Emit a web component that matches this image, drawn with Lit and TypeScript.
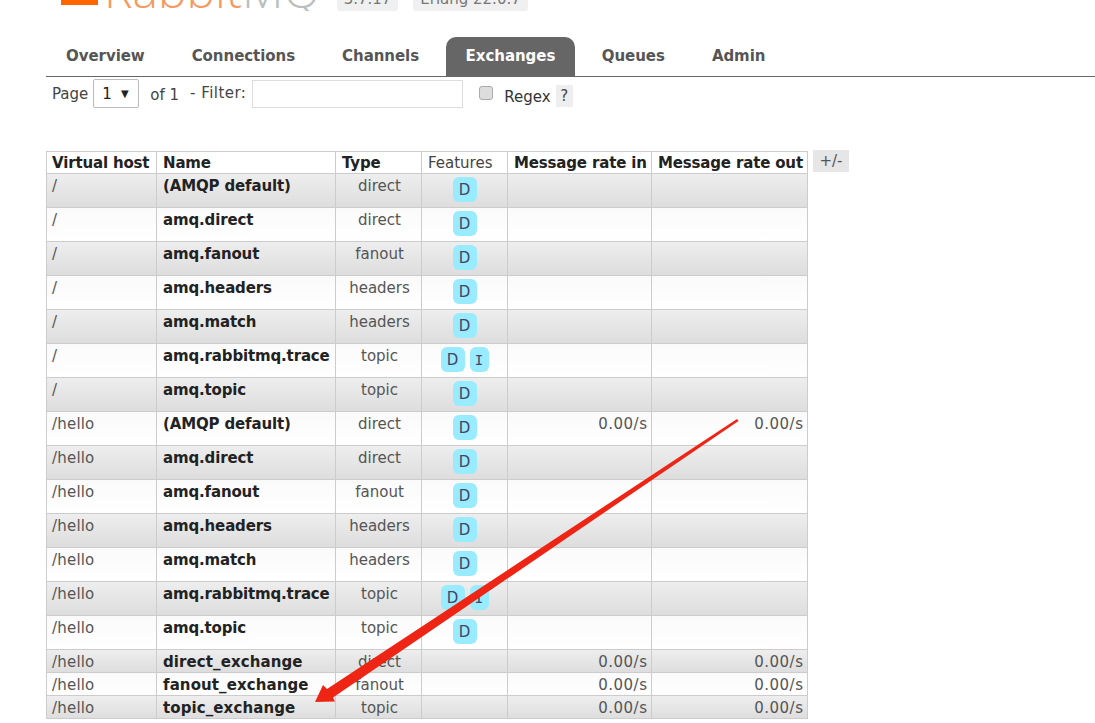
import { LitElement, html, css } from "lit";
import { customElement } from "lit/decorators.js";
import { classMap } from "lit/directives/class-map.js";

type Row = { vhost: string; name: string; type: string; features: string[]; rateIn: string; rateOut: string; small?: boolean };

const base: [string, string, string[]][] = [
  ["(AMQP default)", "direct", ["D"]],
  ["amq.direct", "direct", ["D"]],
  ["amq.fanout", "fanout", ["D"]],
  ["amq.headers", "headers", ["D"]],
  ["amq.match", "headers", ["D"]],
  ["amq.rabbitmq.trace", "topic", ["D", "I"]],
  ["amq.topic", "topic", ["D"]],
];

const rows: Row[] = [
  ...base.map(([name, type, features]) => ({ vhost: "/", name, type, features, rateIn: "", rateOut: "" })),
  ...base.map(([name, type, features], i) => ({
    vhost: "/hello", name, type, features,
    rateIn: i === 0 ? "0.00/s" : "",
    rateOut: i === 0 ? "0.00/s" : "",
  })),
  ...[["direct_exchange", "direct"], ["fanout_exchange", "fanout"], ["topic_exchange", "topic"]].map(([name, type]) => ({
    vhost: "/hello", name, type, features: [], rateIn: "0.00/s", rateOut: "0.00/s", small: true,
  })),
];

const tabs = ["Overview", "Connections", "Channels", "Exchanges", "Queues", "Admin"];

@customElement("app-root")
export class AppRoot extends LitElement {
  static styles = css`
    :host {
      display: block;
      position: relative;
      height: 723px;
      overflow: hidden;
      background: #fff;
      font-family: "DejaVu Sans", Verdana, sans-serif;
      font-size: 15px;
      line-height: 18px;
      color: #555;
    }
    .top { height: 37px; position: relative; overflow: hidden; }
    .brand { display: flex; align-items: flex-end; height: 11px; padding-left: 61px; overflow: hidden; }
    .mark { width: 37px; height: 5px; margin-bottom: 6px; background: #f60; flex: none; }
    .logo {
      margin-left: 6px; width: 233px; flex: none; height: 56px;
      font-family: "Open Sans", sans-serif; font-weight: 300; font-size: 48px; line-height: 56px;
      margin-bottom: -7px; color: #f5995f; white-space: nowrap;
    }
    .logo span { color: #b9bfc0; }
    .badge {
      flex: none; height: 24px; margin-bottom: 0; box-sizing: border-box; border-radius: 3px;
      background: #f0f0f0; color: #777; font-size: 15px; line-height: 18px; white-space: nowrap;
      display: flex; align-items: flex-end; padding-bottom: 3px;
    }
    .b1 { width: 61px; justify-content: center; }
    .b2 { width: 115px; margin-left: 15px; justify-content: center; }

    .tabs { display: flex; gap: 7px; margin-left: 46px; height: 39px; border-bottom: 1px solid #666; }
    .tab {
      padding: 0 20px; font-weight: 700; letter-spacing: -0.05px; color: #555; line-height: 39px; border-radius: 10px 10px 0 0; white-space: nowrap;
    }
    .tab.on { background: #666; color: #fff; padding: 0 19.5px; }

    .filter { display: flex; align-items: flex-start; height: 74px; white-space: nowrap; color: #444; }
    .page { margin: 8px 0 0 52px; }
    .select {
      margin: 2px 0 0 5px; width: 46px; height: 29px; box-sizing: border-box;
      border: 1px solid #bbb; border-radius: 2px; display: flex; align-items: center; color: #222; padding-left: 8px; gap: 9px;
    }
    .select i { font-style: normal; font-size: 10px; }
    .of { margin: 9px 0 0 11px; }
    .flt { margin: 7px 0 0 11px; letter-spacing: 0.45px; }
    .input { margin: 3px 0 0 6px; width: 211px; height: 28px; box-sizing: border-box; border: 1px solid #ddd; }
    .check {
      margin: 9px 0 0 16px; width: 14px; height: 14px; box-sizing: border-box;
      border: 1px solid #aaa; border-radius: 3px; background: #ddd;
    }
    .regex { margin: 11px 0 0 11px; color: #333; }
    .help { margin: 8px 0 0 5px; width: 17px; height: 22px; background: #eee; text-align: center; line-height: 22px; color: #444; }

    .wrap { display: flex; align-items: flex-start; margin-left: 46px; }
    table { border-collapse: collapse; table-layout: fixed; width: 761px; flex: none; }
    th, td { border: 1px solid #ccc; padding: 0 4px 0 6px; box-sizing: border-box; vertical-align: top; white-space: nowrap; }
    th:first-child, td:first-child { padding-left: 5px; }
    th { height: 22px; padding-top: 2px; text-align: left; color: #222; font-weight: 700; letter-spacing: -0.16px; background: #fff; }
    th.plain { font-weight: 400; letter-spacing: 0; color: #444; }
    tbody tr { height: 34px; background: linear-gradient(#fafafa, #fff); }
    tbody tr:nth-child(odd) { background: linear-gradient(#eee, #ddd); }
    tbody tr.small { height: 23px; }
    td { padding-top: 3px; }
    td:first-child { letter-spacing: 0.2px; }
    .nm { font-weight: 700; color: #222; letter-spacing: -0.15px; }
    tr.small .nm { letter-spacing: 0.1px; }
    .ty { text-align: center; }
    .ft { text-align: center; padding: 3px 0 0; }
    .num { text-align: right; letter-spacing: 0.5px; padding-right: 3.5px; }
    .chips { display: flex; justify-content: center; gap: 5px; }
    .chip {
      width: 24px; height: 25px; border-radius: 6px; background: #99ebff; color: #446;
      line-height: 27px; text-align: center;
    }
    .chip.thin { width: 19px; font-family: "DejaVu Sans Mono", monospace; font-size: 14px; }
    .toggle { margin: -1px 0 0 5px; width: 36px; height: 22px; background: #e6e6e6; text-align: center; line-height: 22px; flex: none; }

    .arrow { position: absolute; left: 0; top: 0; pointer-events: none; }
  `;

  render() {
    return html`
      <div class="top">
        <div class="brand">
          <div class="mark"></div>
          <div class="logo">Rabbit<span>MQ</span></div>
          <div class="badge b1">3.7.17</div>
          <div class="badge b2">Erlang 22.0.7</div>
        </div>
      </div>
      <nav class="tabs">
        ${tabs.map((t) => html`<div class=${classMap({ tab: true, on: t === "Exchanges" })}>${t}</div>`)}
      </nav>
      <div class="filter">
        <span class="page">Page</span>
        <div class="select"><span>1</span><i>▼</i></div>
        <span class="of">of 1</span>
        <span class="flt">- Filter:</span>
        <div class="input"></div>
        <div class="check"></div>
        <span class="regex">Regex</span>
        <span class="help">?</span>
      </div>
      <div class="wrap">
        <table>
          <colgroup>
            <col style="width:110px" /><col style="width:179px" /><col style="width:86px" />
            <col style="width:86px" /><col style="width:144px" /><col style="width:156px" />
          </colgroup>
          <thead>
            <tr>
              <th>Virtual host</th><th>Name</th><th>Type</th><th class="plain">Features</th>
              <th>Message rate in</th><th>Message rate out</th>
            </tr>
          </thead>
          <tbody>
            ${rows.map(
              (r) => html`
                <tr class=${classMap({ small: !!r.small })}>
                  <td>${r.vhost}</td>
                  <td class="nm">${r.name}</td>
                  <td class="ty">${r.type}</td>
                  <td class="ft">
                    <div class="chips">
                      ${r.features.map((f) => html`<span class=${classMap({ chip: true, thin: f === "I" })}>${f}</span>`)}
                    </div>
                  </td>
                  <td class="num">${r.rateIn}</td>
                  <td class="num">${r.rateOut}</td>
                </tr>
              `
            )}
          </tbody>
        </table>
        <div class="toggle">+/-</div>
      </div>
      <svg class="arrow" width="1095" height="723" viewBox="0 0 1095 723">
        <polygon points="737,419 738.5,421 333,697.5 335,701.5 315,702 323,685 327,689" fill="#ee2515" />
      </svg>
    `;
  }
}
